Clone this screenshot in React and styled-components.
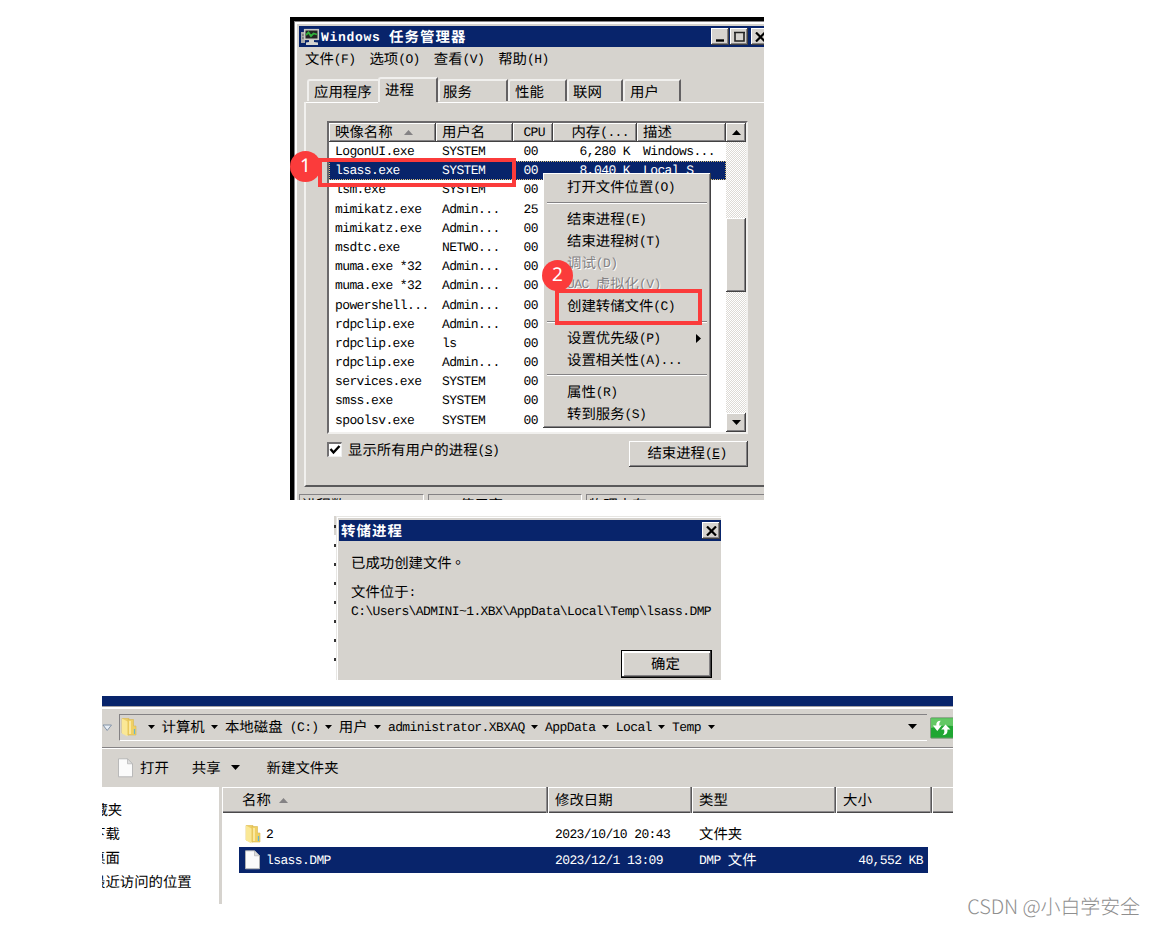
import React from 'react'
import styled, { createGlobalStyle, css } from 'styled-components'

const face = '#d6d3ce'
const navy = '#08246b'
const red = '#fb3b3b'

const GlobalStyle = createGlobalStyle`
    * {
        box-sizing: border-box;
    }
    body {
        margin: 0;
        background: #fff;
        color: #000;
        font-family: 'Noto Sans CJK SC', sans-serif;
        font-size: 14.4px;
        line-height: 20px;
        white-space: pre;
        text-rendering: geometricPrecision;
    }
`

const raised = css`
    background: ${face};
    box-shadow: inset -1px -1px 0 #424142, inset 1px 1px 0 #fff, inset -2px -2px 0 #848284;
`

const Page = styled.main`
    position: relative;
    width: 1155px;
    height: 926px;
    overflow: hidden;
`
const Column = styled.div`
    width: 1055px;
    padding-top: 17px;
    display: flex;
    flex-direction: column;
    align-items: center;
    gap: 16px;
`
const Latin = styled.span`
    font-family: 'Liberation Mono', monospace;
    font-size: 13px;
    line-height: 1;
    letter-spacing: -0.6px;
    vertical-align: 1px;
`

// Latin runs are half the width of a Chinese character
const Text = ({ children }) => (
    <span>
        {children.split(/([\x20-\x7e]+)/).map((part, i) => (
            i % 2 ? <Latin key={i}>{part}</Latin> : part
        ))}
    </span>
)

/* ---------- task manager ---------- */

const TaskManager = styled.section`
    position: relative;
    width: 474px;
    height: 483px;
    margin-right: 1px;
    overflow: hidden;
    background: ${face};
    border-left: 4px solid #000;
    border-top: 4px solid #000;
    padding: 5px 0 0 5px;
    box-shadow: inset 1px 1px 0 #848284, inset 3px 3px 0 #fff;
`
const TitleBar = styled.div`
    display: flex;
    align-items: center;
    height: 21px;
    margin-right: -${props => props.bleed || 0}px;
    padding-right: ${props => (props.bleed ? 0 : 1)}px;
    background: ${navy};
    color: #fff;
    font-weight: 700;
    letter-spacing: 1.1px;
    ${Latin} {
        letter-spacing: 0.7px;
    }
`
const TitleText = styled.span`
    flex: 1;
    padding-left: ${props => props.pad || 2}px;
`
const CaptionButton = styled.span`
    ${raised}
    flex: none;
    display: flex;
    align-items: center;
    justify-content: center;
    width: 18px;
    height: 17px;
    margin-left: ${props => props.gap || 0}px;
`
const MenuBar = styled.div`
    display: flex;
    gap: 14px;
    height: 25px;
    padding-left: 6px;
    line-height: 23px;
`
const Tabs = styled.div`
    display: flex;
    align-items: flex-end;
    height: 30px;
    padding-left: 8px;
`
const Tab = styled.div`
    width: ${props => props.w}px;
    height: ${props => (props.active ? 25 : 22)}px;
    margin-bottom: ${props => (props.active ? 0 : 1)}px;
    padding-left: ${props => props.pad || 5}px;
    line-height: 22px;
    border-left: 2px solid #f1f0ee;
    border-top: 2px solid #f1f0ee;
    border-right: ${props => (props.flat ? 0 : 2)}px solid #636163;
    border-top-left-radius: 3px;
`
const TabPage = styled.div`
    height: 385px;
    margin-left: 5px;
    border-left: 2px solid #f1f0ee;
    border-bottom: 2px solid #5a595a;
    padding: 19px 0 0 21px;
    background: linear-gradient(#fff, #fff) 0 0 / 72px 1px no-repeat, linear-gradient(#fff, #fff) 132px 0 / 400px 1px no-repeat;
`
const ListBox = styled.div`
    display: flex;
    width: 421px;
    height: 313px;
    background: #fff;
    border: 2px solid #6b696b;
    border-right: 2px solid #f1f0ee;
    border-bottom: 2px solid #f1f0ee;
`
const List = styled.div`
    width: 397px;
`
const grid = css`
    display: grid;
    grid-template-columns: 107px 77px 40px 84px 89px;
`
const HeaderRow = styled.div`
    ${grid}
    height: 19px;
`
const HeaderCell = styled.div`
    ${raised}
    display: flex;
    align-items: center;
    justify-content: ${props => (props.right ? 'flex-end' : 'flex-start')};
    gap: 11px;
    padding: 0 8px 1px 6px;
    overflow: hidden;
`
const ProcessRow = styled.div`
    ${grid}
    height: 19.2px;
    line-height: 18px;
    ${props => props.selected && css`
        background: ${navy};
        color: #fff;
        outline: 1px dotted #dcc27a;
        outline-offset: -1px;
    `}
`
const Cell = styled.span`
    padding: 0 ${props => props.pad || 7}px 0 6px;
    text-align: ${props => (props.right ? 'right' : 'left')};
`
const ScrollBar = styled.div`
    width: 20px;
    display: flex;
    flex-direction: column;
    background: repeating-conic-gradient(#fff 0 25%, #dddad5 0 50%) 0 0 / 2px 2px;
`
const ScrollButton = styled.div`
    ${raised}
    flex: none;
    height: 19px;
    display: flex;
    align-items: center;
    justify-content: center;
`
const Thumb = styled.div`
    ${raised}
    height: 74px;
    margin: 76px 0 auto;
`
const PageFooter = styled.div`
    display: flex;
    width: 421px;
    padding-top: 7px;
    justify-content: space-between;
`
const CheckLabel = styled.label`
    display: flex;
    gap: 6px;
    line-height: 17px;
`
const CheckBox = styled.span`
    width: 15px;
    height: 15px;
    margin-top: 1px;
    background: #fff;
    border: 2px solid #737173;
    border-right: 1px solid #efefef;
    border-bottom: 1px solid #efefef;
    display: flex;
`
const Key = styled.u`
    text-decoration-thickness: 1px;
    text-underline-offset: 1px;
`
const EndButton = styled.div`
    ${raised}
    width: 119px;
    height: 26px;
    padding-right: 3px;
    text-align: center;
    line-height: 24px;
`
const StatusBar = styled.div`
    display: flex;
    gap: 4px;
    padding-top: 7px;
`
const StatusCell = styled.div`
    flex: none;
    width: ${props => props.w}px;
    height: 24px;
    border: 1px solid #848284;
    border-right-color: #fff;
    padding-left: 2px;
    line-height: 20px;
`
const ContextMenu = styled.div`
    ${raised}
    position: absolute;
    left: 249px;
    top: 152px;
    width: 168px;
    height: 255px;
    padding: 3px 0;
`
const MenuItem = styled.div`
    display: flex;
    justify-content: space-between;
    align-items: center;
    height: 21.7px;
    padding: 1px 10px 0 24px;
    color: ${props => (props.disabled ? '#848284' : '#000')};
    text-shadow: ${props => (props.disabled ? '1px 1px 0 #fff' : 'none')};
`
const MenuLine = styled.div`
    height: 2px;
    margin: 4.2px 4px;
    background: linear-gradient(#848284 50%, #fff 50%);
`
const RedBox = styled.div`
    position: absolute;
    left: ${props => props.x}px;
    top: ${props => props.y}px;
    width: ${props => props.w}px;
    height: ${props => props.h}px;
    border: 4px solid ${red};
`
const Badge = styled.div`
    position: absolute;
    left: ${props => props.x}px;
    top: ${props => props.y}px;
    width: 31px;
    height: 31px;
    border-radius: 50%;
    background: ${red};
    color: #fff;
    font-family: 'Noto Sans', sans-serif;
    font-size: 19px;
    line-height: 29px;
    text-align: center;
`

/* ---------- message box ---------- */

const MessageWrap = styled.section`
    display: flex;
    width: 387px;
    height: 164px;
`
const Remnant = styled.div`
    width: 2px;
    display: flex;
    flex-direction: column;
    gap: 16px;
    padding-top: 9px;
    background: linear-gradient(${face} 19px, #fff 19px);
`
const Speck = styled.i`
    width: 2px;
    height: 3px;
    background: #333;
`
const MessageBox = styled.div`
    flex: 1;
    background: ${face};
    padding: 4px 0 0 3px;
    box-shadow: inset 1px 1px 0 #e7e6e3, inset 2px 2px 0 #fff;
`
const MessageBody = styled.div`
    padding: 12px 9px 0 12px;
    display: flex;
    flex-direction: column;
`
const Line = styled.div`
    height: ${props => props.h}px;
`
// full stop that sits in the middle of its square
const Stop = styled.span`
    font-family: 'Noto Sans CJK TC', sans-serif;
    margin-left: -1px;
`
const OkButton = styled.div`
    align-self: flex-end;
    width: 91px;
    height: 28px;
    padding-right: 2px;
    border: 1px solid #000;
    background: ${face};
    box-shadow: inset -1px -1px 0 #424142, inset 2px 2px 0 #fff, inset -2px -2px 0 #848284;
    text-align: center;
    line-height: 25px;
`

/* ---------- explorer ---------- */

const Explorer = styled.section`
    width: 851px;
    height: 208px;
    overflow: hidden;
    background: ${face};
    border-top: 10px solid ${navy};
    box-shadow: inset 0 1px 0 #a5a2a5, inset 0 3px 0 #fff;
`
const AddressRow = styled.div`
    display: flex;
    align-items: center;
    height: 42px;
    padding-top: 2px;
    border-bottom: 1px solid #848284;
`
const AddressBox = styled.div`
    display: flex;
    flex: none;
    align-items: center;
    width: 808px;
    height: 27px;
    margin: 0 3px 0 6px;
    border: 1px solid #848284;
    border-right: 0;
    border-bottom-color: #fff;
    padding-bottom: 2px;
`
const Slot = styled.span`
    flex: none;
    display: flex;
    justify-content: center;
    width: ${props => props.w || 20.3}px;
    margin-left: ${props => (props.push ? 'auto' : 0)};
`
const Toolbar = styled.div`
    display: flex;
    align-items: center;
    height: 39px;
    padding: 0 0 1px 15px;
    border-top: 1px solid #fff;
`
const Command = styled.span`
    display: flex;
    align-items: center;
    gap: 6px;
    margin-right: ${props => props.after}px;
`
const Panes = styled.div`
    display: flex;
    height: 118px;
`
const Sidebar = styled.div`
    flex: none;
    width: 117px;
    padding-top: 11px;
    background: #fff;
    overflow: hidden;
`
const SideItem = styled.div`
    height: 24px;
    line-height: 24px;
    margin-left: ${props => props.x}px;
`
const Files = styled.div`
    flex: 1;
    min-width: 0;
    margin-left: 3px;
    background: #fff;
    overflow: hidden;
`
const FileHeader = styled.div`
    display: grid;
    grid-template-columns: 326px 144px 144px 96px 30px;
    height: 26px;
`
const FileHead = styled.div`
    display: flex;
    align-items: center;
    gap: 8px;
    padding-left: ${props => props.pad || 7}px;
    background: ${face};
    box-shadow: inset -1px 0 0 #5a595a, inset -2px 0 0 #8c8a8c, inset 1px 1px 0 #fff, inset 0 -1px 0 #4a494a, inset 0 -2px 0 #8c8a8c;
`
const FileRow = styled.div`
    display: grid;
    grid-template-columns: 309px 144px 144px 92px;
    width: 689px;
    height: 26px;
    margin: ${props => (props.selected ? 0 : '8px')} 0 0 17px;
    line-height: 25px;
    background: ${props => (props.selected ? navy : '#fff')};
    color: ${props => (props.selected ? '#fff' : '#000')};
`
const FileCell = styled.span`
    display: flex;
    align-items: center;
    justify-content: ${props => (props.right ? 'flex-end' : 'flex-start')};
    gap: ${props => props.gap || 4}px;
    padding: 0 5px 2px ${props => (props.icon ? 5 : 7)}px;
`
const Watermark = styled.div`
    position: absolute;
    right: 15px;
    top: 892px;
    color: #8f8f8f;
    font-size: 20px;
    font-weight: 300;
    line-height: 28px;
    letter-spacing: -0.1px;
`

/* ---------- drawings ---------- */

const Arrow = ({ w = 7, h = 4, up, color = '#000' }) => (
    <svg width={w} height={h} viewBox="0 0 10 10" preserveAspectRatio="none">
        <path d={up ? 'M0 10L5 0L10 10Z' : 'M0 0H10L5 10Z'} fill={color} />
    </svg>
)

const Cross = () => (
    <svg width="11" height="10" viewBox="0 0 11 10">
        <path d="M1 0.5L10 9.5M10 0.5L1 9.5" stroke="#000" strokeWidth="2.2" />
    </svg>
)

const MonitorIcon = () => (
    <svg width="20" height="18" viewBox="0 0 20 18">
        <rect x="1" y="4" width="4" height="11" fill="#a9aaa9" />
        <path d="M2 7H4M2 10H4" stroke="#555" />
        <rect x="4.7" y="1.7" width="13.6" height="9.6" fill="#222" stroke="#c9cac6" strokeWidth="1.6" />
        <path d="M6 7L8.500 4.500L11 8L13.500 5.500L17 6.500" stroke="#30b13d" strokeWidth="1.8" fill="none" />
        <path d="M9 12H14V14L18 14.500V17H6V14.500L9 14Z" fill="#d4d4d0" />
    </svg>
)

const FolderIcon = () => (
    <svg width="18" height="20" viewBox="0 0 18 20">
        <path d="M2 1.5H9V18L2 16Z" fill="#efcf65" stroke="#dcb94e" strokeWidth=".6" />
        <path d="M8 2.500H13.500V9H16V18H8Z" fill="#f0d063" stroke="#d9b850" strokeWidth=".6" />
        <path d="M2 1.500L7.500 4.500V19.500L2 16.500Z" fill="#fae896" />
        <path d="M10 4V17" stroke="#fff3b8" strokeWidth="1.4" />
        <path d="M14.5 12V17" stroke="#67b5cf" strokeWidth="1.2" />
    </svg>
)

const FileIcon = () => (
    <svg width="17" height="20" viewBox="0 0 17 20">
        <path d="M1.5 .8H10.5L15.5 5.8V18.8H1.5Z" fill="#fbfbfb" stroke="#b3b3b3" strokeWidth=".9" />
        <path d="M10.5 .8V5.8H15.5Z" fill="#dedede" stroke="#b3b3b3" strokeWidth=".7" />
    </svg>
)

const RefreshIcon = () => (
    <svg width="24" height="22" viewBox="0 0 24 22">
        <rect x=".5" y=".5" width="26" height="21" rx="1" fill="#1fa632" stroke="#8a9a86" />
        <path d="M1 1H24V9Q12 7 1 11Z" fill="#63c865" />
        <path d="M11 3.500Q6 3.500 6.500 8.500H3L7.500 14L12 8.500H9.500Q9 6 11 3.500Z" fill="#fff" />
        <path d="M13 18.500Q18.500 18 18 12.500H21L16 7.500L11.500 12.500H14.500Q15.500 16 13 18.500Z" fill="#fff" />
    </svg>
)

const processes = [
    ['LogonUI.exe', 'SYSTEM', '00', '6,280 K', 'Windows...'],
    ['lsass.exe', 'SYSTEM', '00', '8,040 K', 'Local S'],
    ['lsm.exe', 'SYSTEM', '00'],
    ['mimikatz.exe', 'Admin...', '25'],
    ['mimikatz.exe', 'Admin...', '00'],
    ['msdtc.exe', 'NETWO...', '00'],
    ['muma.exe *32', 'Admin...', '00'],
    ['muma.exe *32', 'Admin...', '00'],
    ['powershell...', 'Admin...', '00'],
    ['rdpclip.exe', 'Admin...', '00'],
    ['rdpclip.exe', 'ls', '00'],
    ['rdpclip.exe', 'Admin...', '00'],
    ['services.exe', 'SYSTEM', '00'],
    ['smss.exe', 'SYSTEM', '00'],
    ['spoolsv.exe', 'SYSTEM', '00'],
]

const menu = [
    { label: '打开文件位置(O)' },
    null,
    { label: '结束进程(E)' },
    { label: '结束进程树(T)' },
    { label: '调试(D)', disabled: true },
    { label: 'UAC 虚拟化(V)', disabled: true },
    { label: '创建转储文件(C)' },
    null,
    { label: '设置优先级(P)', sub: true },
    { label: '设置相关性(A)...' },
    null,
    { label: '属性(R)' },
    { label: '转到服务(S)' },
]

const crumbs = ['计算机', '本地磁盘 (C:)', '用户', 'administrator.XBXAQ', 'AppData', 'Local', 'Temp']

const TaskManagerWindow = () => (
    <TaskManager>
        <TitleBar bleed={5}>
            <Slot w={21}><MonitorIcon /></Slot>
            <TitleText pad={1}><Text>Windows 任务管理器</Text></TitleText>
            <CaptionButton>
                <svg width="8" height="11"><path d="M0 9.500H8" stroke="#000" strokeWidth="2.4" /></svg>
            </CaptionButton>
            <CaptionButton gap={1}>
                <svg width="11" height="11"><path d="M1 1V10H10V1M0 1.500H11" fill="none" stroke="#222" strokeWidth="1.6" /></svg>
            </CaptionButton>
            <CaptionButton gap={3}><Cross /></CaptionButton>
        </TitleBar>
        <MenuBar>
            {['文件(F)', '选项(O)', '查看(V)', '帮助(H)'].map(m => <Text key={m}>{m}</Text>)}
        </MenuBar>
        <Tabs>
            <Tab w={71} flat>应用程序</Tab>
            <Tab w={60} active>进程</Tab>
            <Tab w={70} pad={3}>服务</Tab>
            <Tab w={59}>性能</Tab>
            <Tab w={56} pad={4}>联网</Tab>
            <Tab w={58}>用户</Tab>
        </Tabs>
        <TabPage>
            <ListBox>
                <List>
                    <HeaderRow>
                        <HeaderCell>映像名称<Arrow up w={9} h={5} color="#848284" /></HeaderCell>
                        <HeaderCell>用户名</HeaderCell>
                        <HeaderCell right><Text>CPU</Text></HeaderCell>
                        <HeaderCell right><Text>内存(...</Text></HeaderCell>
                        <HeaderCell>描述</HeaderCell>
                    </HeaderRow>
                    {processes.map(([name, user, cpu, memory, about], i) => (
                        <ProcessRow key={i} selected={i === 1}>
                            <Cell><Text>{name}</Text></Cell>
                            <Cell><Text>{user}</Text></Cell>
                            <Cell right pad={15}><Text>{cpu}</Text></Cell>
                            <Cell right>{memory && <Text>{memory}</Text>}</Cell>
                            <Cell>{about && <Text>{about}</Text>}</Cell>
                        </ProcessRow>
                    ))}
                </List>
                <ScrollBar>
                    <ScrollButton><Arrow up w={9} h={5} /></ScrollButton>
                    <Thumb />
                    <ScrollButton><Arrow w={9} h={5} /></ScrollButton>
                </ScrollBar>
            </ListBox>
            <PageFooter>
                <CheckLabel>
                    <CheckBox>
                        <svg width="12" height="12"><path d="M1.500 5L4.500 8.500L10.500 2" fill="none" stroke="#000" strokeWidth="2.4" /></svg>
                    </CheckBox>
                    <span>显示所有用户的进程<Latin>(<Key>S</Key>)</Latin></span>
                </CheckLabel>
                <EndButton>结束进程<Latin>(<Key>E</Key>)</Latin></EndButton>
            </PageFooter>
        </TabPage>
        <StatusBar>
            <StatusCell w={125}>进程数</StatusCell>
            <StatusCell w={154}><Text>{'    使用率'}</Text></StatusCell>
            <StatusCell w={190}>物理内存</StatusCell>
        </StatusBar>
        <ContextMenu>
            {menu.map((item, i) => (item ? (
                <MenuItem key={i} disabled={item.disabled}>
                    <Text>{item.label}</Text>
                    {item.sub && <svg width="5" height="9"><path d="M0 0L5 4.500L0 9Z" /></svg>}
                </MenuItem>
            ) : <MenuLine key={i} />))}
        </ContextMenu>
        <RedBox x={24} y={137} w={198} h={29} />
        <RedBox x={261} y={268} w={147} h={36} />
        <Badge x={248} y={239}>2</Badge>
    </TaskManager>
)

const MessageWindow = () => (
    <MessageWrap>
        <Remnant>
            {[0, 1, 2, 3, 4, 5, 6, 7].map(i => <Speck key={i} />)}
        </Remnant>
        <MessageBox>
            <TitleBar>
                <TitleText>转储进程</TitleText>
                <CaptionButton><Cross /></CaptionButton>
            </TitleBar>
            <MessageBody>
                <Line h={29}>已成功创建文件<Stop lang="zh-TW">。</Stop></Line>
                <Line h={19}><Text>文件位于:</Text></Line>
                <Line h={49}><Text>{'C:\\Users\\ADMINI~1.XBX\\AppData\\Local\\Temp\\lsass.DMP'}</Text></Line>
                <OkButton>确定</OkButton>
            </MessageBody>
        </MessageBox>
    </MessageWrap>
)

const ExplorerWindow = () => (
    <Explorer>
        <AddressRow>
            <svg width="11" height="8"><path d="M1 1H9.500L5.200 6.500Z" fill="#e8eef5" stroke="#8494a8" /></svg>
            <AddressBox>
                <FolderIcon />
                <Slot w={3.5} />
                <Slot><Arrow /></Slot>
                {crumbs.map(c => (
                    <React.Fragment key={c}>
                        <Text>{c}</Text>
                        <Slot><Arrow /></Slot>
                    </React.Fragment>
                ))}
                <Slot push w={28}><Arrow w={9} h={5} /></Slot>
            </AddressBox>
            <RefreshIcon />
        </AddressRow>
        <Toolbar>
            <Command after={23}><FileIcon />打开</Command>
            <Command after={23}>共享<Slot w={17}><Arrow w={9} h={5} /></Slot></Command>
            <Command>新建文件夹</Command>
        </Toolbar>
        <Panes>
            <Sidebar>
                <SideItem x={-23}>收藏夹</SideItem>
                <SideItem x={-11}>下载</SideItem>
                <SideItem x={-11}>桌面</SideItem>
                <SideItem x={-11}>最近访问的位置</SideItem>
            </Sidebar>
            <Files>
                <FileHeader>
                    <FileHead pad={20}>名称<Arrow up w={9} h={5} color="#848284" /></FileHead>
                    <FileHead>修改日期</FileHead>
                    <FileHead>类型</FileHead>
                    <FileHead>大小</FileHead>
                    <FileHead />
                </FileHeader>
                <FileRow>
                    <FileCell icon><FolderIcon /><Text>2</Text></FileCell>
                    <FileCell><Text>2023/10/10 20:43</Text></FileCell>
                    <FileCell>文件夹</FileCell>
                </FileRow>
                <FileRow selected>
                    <FileCell icon gap={5}><FileIcon /><Text>lsass.DMP</Text></FileCell>
                    <FileCell><Text>2023/12/1 13:09</Text></FileCell>
                    <FileCell><Text>DMP 文件</Text></FileCell>
                    <FileCell right><Text>40,552 KB</Text></FileCell>
                </FileRow>
            </Files>
        </Panes>
    </Explorer>
)

export default () => (
    <Page>
        <GlobalStyle />
        <Column>
            <TaskManagerWindow />
            <MessageWindow />
            <ExplorerWindow />
        </Column>
        <Badge x={290} y={151}>1</Badge>
        <Watermark>CSDN @小白学安全</Watermark>
    </Page>
)
